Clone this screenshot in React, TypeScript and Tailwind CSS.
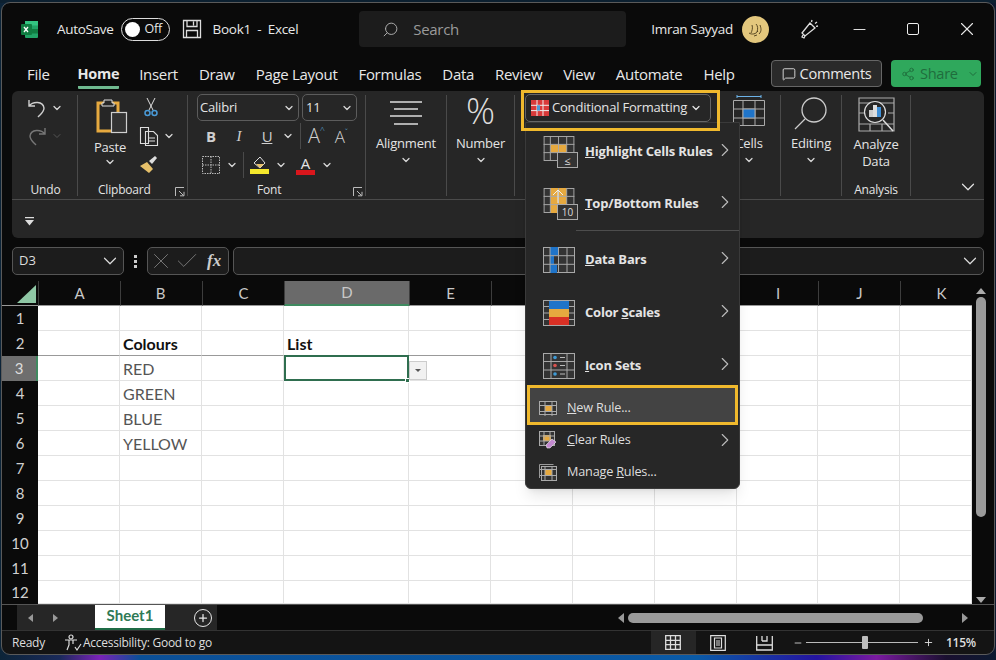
import React from 'react';
import { ChevronDown, ChevronRight, Search, X, Minus, Plus, Check, MessageSquare, Share2 } from 'lucide-react';

const UI = "font-['Open_Sans','Noto_Sans',sans-serif]";
const rows = [1, 2, 3, 4, 5, 6, 7, 8, 9, 10, 11, 12];
const cols = ['A', 'B', 'C', 'D', 'E', 'F', 'G', 'H', 'I', 'J', 'K'];
const values: Record<string, string> = { B2: 'Colours', D2: 'List', B3: 'RED', B4: 'GREEN', B5: 'BLUE', B6: 'YELLOW' };

const Chev = ({ className = '' }: { className?: string }) => (
    <ChevronDown size={12} strokeWidth={2.5} className={`text-[#d8d8d8] ${className}`} />
);

const Launcher = () => (
    <svg width="10" height="10" viewBox="0 0 10 10" fill="none" stroke="#bbb" strokeWidth="1">
        <path d="M.5 9V.5H9M.5.5M4 4l4.5 4.5M5 8.8h4V4.8" />
    </svg>
);

// small spreadsheet glyph used by the menu, the fill is what differs per item
const GridIcon = ({ h = 26, children }: { h?: number; children?: React.ReactNode }) => (
    <svg width={32} height={h} viewBox="0 0 32 26" fill="none" className="shrink-0">
        <rect x=".5" y=".5" width="31" height="25" fill="#333" stroke="#a8a8a8" />
        {children}
        <path d="M7 0v26M15.500 0v26M24 0v26M0 8.700h32M0 17.300h32" stroke="#a8a8a8" strokeWidth="1" />
    </svg>
);

function SmallIcon({ kind }: { kind: string }) {
    if (kind === 'clear') {
        return (
            <svg width="18" height="18" viewBox="0 0 18 18" fill="none" className="shrink-0">
                <rect x=".5" y=".5" width="15" height="14" stroke="#aaa" fill="#333" />
                <rect x="4" y="4" width="8" height="6" fill="#e6a93f" />
                <path d="M5 .5v14M11 .5v14M.5 5h15M.5 10h15" stroke="#aaa" />
                <path d="M7 14l6-6 4 3-6 6H8z" fill="#c38ad0" stroke="#eee" strokeWidth=".6" />
            </svg>
        );
    }
    return (
        <svg width="18" height="18" viewBox="0 0 18 18" fill="none" className="shrink-0">
            {kind === 'manage' && <path d="M.5 15V1.500M.5 1.500h14" stroke="#999" />}
            <rect x={kind === 'manage' ? 2.5 : .5} y={kind === 'manage' ? 3.5 : 2.5} width={kind === 'manage' ? 15 : 17} height={kind === 'manage' ? 14 : 13} stroke="#aaa" fill="#333" />
            <rect x="6" y="6.500" width="7" height="6" fill="#e6a93f" />
            <path d="M6 3v14M13 3v14M1 6.500h16M1 12.500h16" stroke="#aaa" />
        </svg>
    );
}

const menuIcons: Record<string, React.ReactNode> = {
    highlight: (
        <div className="relative w-[35px] h-[32px] shrink-0">
            <GridIcon h={25}><rect x="7" y="8.700" width="17" height="8.600" fill="#e6a93f" /></GridIcon>
            <div className="absolute right-0 bottom-0 w-[21px] h-[16px] bg-[#333] border-[1.5px] border-[#a8a8a8] flex items-center justify-center text-[11px] leading-none text-[#ddd]">≤</div>
        </div>
    ),
    top: (
        <div className="relative w-[35px] h-[32px] shrink-0">
            <GridIcon h={25}>
                <rect x="7" y="0" width="17" height="26" fill="#e6a93f" />
            </GridIcon>
            <svg width="12" height="14" viewBox="0 0 12 14" fill="none" stroke="#eee" className="absolute left-[9px] top-[1px]"><path d="M6 14V1M1 6l5-5 5 5" /></svg>
            <div className="absolute right-0 bottom-0 w-[21px] h-[16px] bg-[#333] border-[1.5px] border-[#a8a8a8] flex items-center justify-center text-[10px] leading-none text-[#ddd]">10</div>
        </div>
    ),
    bars: <GridIcon><path fill="#1f74c9" d="M7 0h9v8.700H7zM7 8.700h4v8.600H7zM7 17.300h7V26H7z" /></GridIcon>,
    scales: (
        <svg width="32" height="26" viewBox="0 0 32 26" fill="none" className="shrink-0">
            <rect x=".5" y=".5" width="31" height="25" fill="#333" stroke="#a8a8a8" />
            <path d="M0 6.500h6M0 13h6M0 19.500h6M26 6.500h6M26 13h6M26 19.500h6" stroke="#a8a8a8" />
            <rect x="6" y="1" width="20" height="8" fill="#1f74c9" />
            <rect x="6" y="9" width="20" height="8" fill="#e6a93f" />
            <rect x="6" y="17" width="20" height="8" fill="#d93025" />
        </svg>
    ),
    sets: (
        <svg width="32" height="26" viewBox="0 0 32 26" fill="none" className="shrink-0">
            <rect x=".5" y=".5" width="31" height="25" fill="#333" stroke="#a8a8a8" />
            <path d="M8 0v26M24 0v26M0 8.500h32M0 17h32" stroke="#a8a8a8" />
            <circle cx="12" cy="4.500" r="1.800" fill="#3f9bd6" /><circle cx="12" cy="12.500" r="1.800" fill="#d9534f" /><circle cx="12" cy="21" r="1.800" fill="#3f9bd6" />
            <path d="M17 4.500h5M17 12.500h5M17 21h5" stroke="#bbb" />
        </svg>
    ),
};

const MenuChevron = () => <ChevronRight size={22} strokeWidth={1.2} className="text-[#bbb] shrink-0" />;

function BigItem({ icon, label, underline, pre = '', h }: { icon: string; label: string; underline: string; pre?: string; h: string }) {
    return (
        <div className={`flex items-center pl-[17px] pr-[3px] ${h}`}>
            <div className="w-[42px] flex shrink-0">{menuIcons[icon]}</div>
            <span className="flex-1 text-[13px] font-bold text-[#e4e4e4] tracking-[-0.2px]">{pre}<u>{underline}</u>{label}</span>
            <div className="mb-[4px]"><MenuChevron /></div>
        </div>
    );
}

function CondMenu() {
    return (
        <div className="absolute left-[523px] top-[119px] w-[215px] h-[367px] bg-[#272727] rounded-b-[6px] border border-[#3a3a3a] pt-[3px] shadow-lg z-20">
            <BigItem icon="highlight" underline="H" label="ighlight Cells Rules" h="h-[52px]" />
            <BigItem icon="top" underline="T" label="op/Bottom Rules" h="h-[52px]" />
            <div className="h-[3px] ml-[50px] border-t border-[#4d4d4d]" />
            <BigItem icon="bars" underline="D" label="ata Bars" h="h-[53px]" />
            <BigItem icon="scales" pre="Color " underline="S" label="cales" h="h-[53px]" />
            <BigItem icon="sets" underline="I" label="con Sets" h="h-[53px]" />
            <div className="relative h-[32px] flex items-center pl-[13px] text-[12.7px] text-[#dedede] tracking-[-0.2px]">
                <div className="absolute left-[1px] right-[1px] top-[-7px] bottom-[-1px] border-[3px] border-[#f0b92d] bg-[#434343]" />
                <div className="relative flex items-center">
                    <div className="w-[28px]"><SmallIcon kind="new" /></div>
                    <span><u>N</u>ew Rule...</span>
                </div>
            </div>
            <div className="h-[32px] flex items-center pl-[13px] pr-[3px] text-[12.7px] text-[#dedede] tracking-[-0.2px]">
                <div className="w-[28px]"><SmallIcon kind="clear" /></div>
                <span className="flex-1"><u>C</u>lear Rules</span>
                <MenuChevron />
            </div>
            <div className="h-[32px] flex items-center pl-[13px] text-[12.7px] text-[#dedede] tracking-[-0.2px]">
                <div className="w-[28px]"><SmallIcon kind="manage" /></div>
                <span>Manage <u>R</u>ules...</span>
            </div>
        </div>
    );
}

function TitleBar() {
    return (
        <div className="h-[57px] flex items-center pb-[5px] text-[13.5px] text-[#e8e8e8] tracking-[-0.3px]">
            <svg width="19" height="19" viewBox="0 0 19 19" className="ml-[18px]">
                <rect x="5" y="1" width="13" height="17" rx="1" fill="#21a366" />
                <rect x="5" y="1" width="13" height="4.500" fill="#33c481" />
                <rect x="11" y="9" width="7" height="4.500" fill="#107c41" />
                <rect x="1" y="4" width="11" height="11" rx="1" fill="#107c41" />
                <path d="M4 7l4 5M8 7l-4 5" stroke="#fff" strokeWidth="1.300" />
            </svg>
            <span className="ml-[18px]">AutoSave</span>
            <div className="ml-[7px] w-[49px] h-[23px] rounded-full border-[1.5px] border-[#ddd] flex items-center pl-[3px]">
                <div className="w-[15px] h-[15px] rounded-full bg-white" />
                <span className="ml-[5px] text-[12.5px]">Off</span>
            </div>
            <svg width="20" height="20" viewBox="0 0 20 20" fill="none" stroke="#ddd" strokeWidth="1.300" className="ml-[12px]">
                <path d="M1.500 1.500h17v17h-17zM5 1.500v6h10v-6M4.500 18.500v-7h11v7M11.500 2.500v4" />
            </svg>
            <span className="ml-[11px] whitespace-pre">Book1  -  Excel</span>
            <div className="ml-[61px] w-[267px] h-[36px] rounded-[4px] bg-[#1c1c1c] flex items-center pl-[23px] text-[#9a9a9a] text-[15px]">
                <Search size={17} strokeWidth={1.400} className="-scale-x-100 text-[#aaa]" />
                <span className="ml-[14px]">Search</span>
            </div>
            <span className="ml-[25px]">Imran Sayyad</span>
            <svg width="27" height="27" viewBox="0 0 27 27" className="ml-[9px]">
                <circle cx="13.500" cy="13.500" r="13.500" fill="#e3c77d" />
                <path d="M7 17c3 2 7 1 9-2M10 9c1 3 0 6-1 8M14 8c2 2 2 5 1 8M18 9c1 3 2 6-1 9M12 20l3-1" stroke="#4a3a18" strokeWidth=".9" fill="none" />
            </svg>
            <svg width="20" height="20" viewBox="0 0 20 20" fill="none" stroke="#e0e0e0" strokeWidth="1.300" className="ml-[30px]">
                <path d="M11 4l5 5-10 8-3-3zM6 17l-1 2-2-1 1-2M13 1l-.5 2M18 3l-2 1.500M19 7l-2 .3" />
            </svg>
            <Minus size={19} strokeWidth={1.200} className="ml-[31px]" />
            <div className="ml-[38px] w-[12px] h-[12px] border-[1.5px] border-[#eee] rounded-[2px]" />
            <X size={22} strokeWidth={1.200} className="ml-[37px]" />
        </div>
    );
}

function TabBar() {
    const tabs = ['Insert', 'Draw', 'Page Layout', 'Formulas', 'Data', 'Review', 'View', 'Automate', 'Help'];
    return (
        <div className="h-[30px] flex items-start text-[15px] text-[#e8e8e8] tracking-[-0.3px]">
            <span className="ml-[25px] mt-[3px]">File</span>
            <span className="ml-[28px] mt-[3px] font-bold border-b-[3px] border-[#6fb98f] h-[26px] rounded-b-[1px] text-[14.5px]">Home</span>
            <div className="ml-[20px] mt-[3px] flex gap-[21px]">
                {tabs.map((t) => <span key={t}>{t}</span>)}
            </div>
            <div className="ml-auto mr-[13px] flex gap-[9px] text-[14.6px]">
                <div className="w-[111px] h-[27px] rounded-[4px] border border-[#666] bg-[#2a2a2a] flex items-center justify-center gap-[4px]">
                    <MessageSquare size={14} strokeWidth={1.500} />Comments
                </div>
                <div className="w-[90px] h-[27px] rounded-[4px] bg-[#2fa85c] flex items-center pl-[10px] text-[#1f6d3c]">
                    <Share2 size={14} strokeWidth={1.500} /><span className="ml-[5px]">Share</span>
                    <ChevronDown size={12} strokeWidth={2} className="ml-[9px]" />
                </div>
            </div>
        </div>
    );
}

function BigGroup({ w, label, icon }: { w: string; label: string; icon: React.ReactNode }) {
    return (
        <div className={`${w} h-[101px] mt-[4px] flex flex-col items-center border-r border-[#4a4a4a] shrink-0`}>
            <div className="h-[35px] flex items-end justify-center">{icon}</div>
            <span className="text-[13px] mt-[4px] leading-[18px] text-center">{label}</span>
            <Chev className="mt-[2px]" />
        </div>
    );
}

function Ribbon() {
    return (
        <div className="mx-[10px] mt-[1px] h-[147px] bg-[#262626] rounded-[6px] text-[#e4e4e4] text-[12px] tracking-[-0.2px]">
            <div className="h-[109px] border-b-[1.5px] border-[#4b4b4b] flex">
                {/* Undo */}
                <div className="w-[66px] h-[101px] mt-[4px] border-r border-[#4a4a4a] flex flex-col items-center shrink-0">
                    <div className="flex items-center gap-[5px] mt-[2px] ml-[2px] h-[22px]">
                        <svg width="18" height="20" viewBox="0 0 18 20" fill="none" stroke="#cfcfcf" strokeWidth="1.400"><path d="M1 2v6h6M1 8c4-5 14-5 15 2 0 4-3 6-6 9" /></svg>
                        <Chev />
                    </div>
                    <div className="flex items-center gap-[5px] mt-[6px] ml-[2px] h-[22px]">
                        <svg width="18" height="20" viewBox="0 0 18 20" fill="none" stroke="#777" strokeWidth="1.400"><path d="M17 2v6h-6M17 8C13 3 3 3 2 10c0 4 3 6 6 9" /></svg>
                        <ChevronDown size={12} className="text-[#555]" />
                    </div>
                    <span className="mt-auto mb-[-3px] ml-[2px] leading-[18px]">Undo</span>
                </div>
                {/* Clipboard */}
                <div className="w-[110px] h-[101px] mt-[4px] border-r border-[#4a4a4a] flex shrink-0 relative">
                    <div className="w-[52px] ml-[6px] flex flex-col items-center">
                        <svg width="32" height="36" viewBox="0 0 32 36" fill="none" className="mt-[3px] ml-[4px]">
                            <path d="M2 5h20v28H2z" stroke="#e6a93f" strokeWidth="3" />
                            <path d="M8 5V2h8v3h2v3H6V5z" stroke="#ddd" strokeWidth="1" fill="#262626" />
                            <rect x="15.500" y="14.500" width="15" height="20" fill="#333" stroke="#cfcfcf" strokeWidth="1.200" />
                        </svg>
                        <span className="text-[13px] mt-[4px] leading-[18px]">Paste</span>
                        <Chev />
                    </div>
                    <div className="flex flex-col ml-[3px]">
                        <svg width="14" height="20" viewBox="0 0 14 20" fill="none" stroke="#ddd" className="ml-[5px] mt-[2px]">
                            <path d="M3 1l6 12M11 1L5 13" /><circle cx="3.500" cy="16" r="2.500" stroke="#4a9bd8" strokeWidth="1.500" /><circle cx="10.500" cy="16" r="2.500" stroke="#4a9bd8" strokeWidth="1.500" />
                        </svg>
                        <div className="flex items-center gap-[4px] mt-[9px]">
                            <svg width="20" height="20" viewBox="0 0 20 20" fill="none" stroke="#ddd" strokeWidth="1.100">
                                <path d="M1.500 1.500h8v16h-8zM6.500 5.500h8l4 4v10h-12z" fill="#262626" /><path d="M9 12h7M9 15h7" />
                            </svg>
                            <Chev />
                        </div>
                        <svg width="20" height="20" viewBox="0 0 20 20" className="mt-[8px]">
                            <path d="M1 12l7-4 6 7-4 4z" fill="#e6c06a" /><path d="M10 7l6-5 2 2-5 6" fill="#ddd" />
                        </svg>
                    </div>
                    <span className="absolute left-[20px] bottom-[-3px] leading-[18px]">Clipboard</span>
                    <div className="absolute right-[2px] bottom-[-1px]"><Launcher /></div>
                </div>
                {/* Font */}
                <div className="w-[178px] h-[101px] mt-[4px] border-r border-[#4a4a4a] relative shrink-0 pl-[9px]">
                    <div className="flex gap-[3px] mt-[-1px] text-[13px]">
                        <div className="w-[102px] h-[27px] rounded-[5px] border border-[#5c5c5c] flex items-center justify-between pl-[2px] pr-[3px]">Calibri<Chev /></div>
                        <div className="w-[55px] h-[27px] rounded-[5px] border border-[#5c5c5c] flex items-center justify-between pl-[3px] pr-[3px]">11<Chev /></div>
                    </div>
                    <div className="flex items-center h-[28px] text-[15px] mt-[1px]">
                        <span className="w-[28px] text-center font-bold text-[#cfcfcf]">B</span>
                        <span className="w-[28px] text-center italic text-[#cfcfcf] font-['Liberation_Serif',serif]">I</span>
                        <span className="w-[28px] text-center underline text-[#cfcfcf]">U</span>
                        <Chev className="ml-[1px]" />
                        <div className="h-[26px] border-l border-[#4a4a4a] ml-[6px] mr-[7px]" />
                        <span className="text-[20px] leading-none text-[#d0d0d0] font-light">A<span className="text-[9px] align-top text-[#5aa6dd]">^</span></span>
                        <span className="text-[17px] leading-none text-[#d0d0d0] font-light ml-[10px]">A<span className="text-[9px] align-top text-[#5aa6dd]">ˇ</span></span>
                    </div>
                    <div className="flex items-center h-[28px] mt-[1px]">
                        <svg width="18" height="18" viewBox="0 0 18 18" fill="none" stroke="#bbb" className="ml-[5px]" strokeDasharray="1.500 1"><path d="M.5.5h17v17H.5zM9 .5v17M.5 9h17" /></svg>
                        <Chev className="ml-[6px]" />
                        <div className="h-[26px] border-l border-[#4a4a4a] ml-[5px]" />
                        <div className="ml-[6px] w-[19px] flex flex-col items-center">
                            <svg width="16" height="13" viewBox="0 0 16 13" fill="none"><path d="M2 7l6-6 5 6-5 5z" stroke="#ddd" /><path d="M4 8h8l-4 4z" fill="#e6c06a" /></svg>
                            <div className="w-[19px] h-[5px] bg-[#f5e82c]" />
                        </div>
                        <Chev className="ml-[6px]" />
                        <div className="ml-[9px] w-[19px] flex flex-col items-center leading-none">
                            <span className="text-[15px] h-[14px] leading-[14px]">A</span>
                            <div className="w-[19px] h-[5px] bg-[#d9161c]" />
                        </div>
                        <Chev className="ml-[6px]" />
                    </div>
                    <span className="absolute left-[69px] bottom-[-3px] leading-[18px]">Font</span>
                    <div className="absolute right-[2px] bottom-[-1px]"><Launcher /></div>
                </div>
                <BigGroup
                    w="w-[81px]"
                    label="Alignment"
                    icon={
                        <svg width="34" height="28" viewBox="0 0 34 28" stroke="#ddd" strokeWidth="1.500" className="mb-[2px]"><path d="M1 2h32M5 9h24M1 16h32M5 24h24" /></svg>
                    }
                />
                <BigGroup w="w-[68px]" label="Number" icon={<span className="text-[36px] leading-[38px] font-light text-[#ddd]">%</span>} />
                {/* Styles, mostly under the menu */}
                <div className="w-[266px] h-[101px] mt-[4px] border-r border-[#4a4a4a] shrink-0 flex">
                    <div className="ml-[10px] mt-[-1px] w-[186px] h-[28px] rounded-[5px] border border-[#666] flex items-center pl-[5px] text-[13px]">
                        <svg width="18" height="16" viewBox="0 0 18 16" className="shrink-0">
                            <rect width="18" height="16" fill="#d93a3a" />
                            <path d="M0 5.300h18M0 10.600h18M6 0v16M12 0v16" stroke="#eee" />
                            <rect x="6" y="5.300" width="3" height="5.300" fill="#4a9bd8" />
                        </svg>
                        <span className="ml-[3px] whitespace-nowrap">Conditional Formatting</span>
                        <ChevronDown size={12} strokeWidth={2.500} className="ml-[3px]" />
                    </div>
                    <div className="ml-[21px] flex flex-col items-center w-[34px]">
                        <svg width="34" height="32" viewBox="0 0 34 32" fill="none" stroke="#aaa">
                            <path d="M5 1.500h24M5 0v3M29 0v3" stroke="#6db3e8" />
                            <path d="M1.500 5.500h31v25h-31zM1.500 14h31M1.500 23h31M11 5.500v25M23 5.500v25" />
                            <rect x="11" y="14" width="12" height="9" fill="#1f74c9" />
                        </svg>
                        <span className="text-[13px] mt-[7px] leading-[18px]">Cells</span>
                        <Chev className="mt-[2px]" />
                    </div>
                </div>
                <BigGroup
                    w="w-[61px]"
                    label="Editing"
                    icon={
                        <svg width="34" height="33" viewBox="0 0 34 33" fill="none" stroke="#ccc" strokeWidth="1.300"><circle cx="20" cy="13" r="12" /><path d="M11 22L1 32" /></svg>
                    }
                />
                <div className="w-[69px] h-[101px] mt-[4px] border-r border-[#4a4a4a] flex flex-col items-center shrink-0">
                    <svg width="37" height="37" viewBox="0 0 37 37" fill="none" stroke="#aaa" strokeWidth="1.200" className="mt-[2px]">
                        <path d="M1 1h35v33H1zM1 6h35M1 27h35M1 16h6M30 16h6M12 27v7M24 27v7" />
                        <circle cx="17" cy="15" r="10.500" fill="#262626" stroke="#ddd" />
                        <path d="M25 23l10 11" stroke="#ddd" strokeWidth="1.500" />
                        <rect x="11" y="13" width="4" height="7" fill="#ccc" stroke="none" />
                        <rect x="15" y="8" width="4" height="12" fill="#ddd" stroke="none" />
                        <rect x="19" y="10" width="4" height="10" fill="#3f8fd6" stroke="none" />
                    </svg>
                    <span className="text-[13px] leading-[17px] mt-[2px]">Analyze</span>
                    <span className="text-[13px] leading-[17px]">Data</span>
                    <span className="mt-auto mb-[-3px] leading-[18px]">Analysis</span>
                </div>
                <div className="flex-1 flex items-end justify-end pr-[5px] pb-[1px]">
                    <ChevronDown size={22} strokeWidth={1.300} />
                </div>
            </div>
            <div className="h-[37px] flex items-center pl-[13px] pt-[5px]">
                <svg width="9" height="9" viewBox="0 0 9 9" fill="#ddd"><path d="M0 0h9v1.200H0zM0 3h9L4.500 8.500z" /></svg>
            </div>
        </div>
    );
}

function FormulaBar() {
    return (
        <div className="mx-[10px] mt-[9px] h-[28px] flex text-[#dcdcdc] text-[13px]">
            <div className="w-[112px] rounded-[5px] border border-[#555] bg-[#1c1c1c] flex items-center justify-between pl-[6px] pr-[2px]">
                D3<ChevronDown size={22} strokeWidth={1.300} />
            </div>
            <div className="w-[23px] flex flex-col items-center justify-center gap-[2px]">
                <div className="w-[3px] h-[3px] bg-[#ccc]" /><div className="w-[3px] h-[3px] bg-[#ccc]" /><div className="w-[3px] h-[3px] bg-[#ccc]" />
            </div>
            <div className="w-[82px] rounded-[5px] border border-[#555] bg-[#1c1c1c] flex items-center">
                <X size={26} strokeWidth={.9} className="text-[#777]" />
                <Check size={26} strokeWidth={.9} className="text-[#777]" />
                <span className="ml-[7px] font-['Liberation_Serif',serif] italic font-bold text-[17px] text-[#ccc]">fx</span>
            </div>
            <div className="ml-[4px] flex-1 rounded-[5px] border border-[#555] bg-[#1c1c1c] flex items-center justify-end pr-[2px]">
                <ChevronDown size={22} strokeWidth={1.300} />
            </div>
        </div>
    );
}

function Sheet() {
    return (
        <div className="mt-[6px] flex h-[323px]">
            <div className="w-[970px] grid grid-cols-[36px_82px_82px_82px_125px_82px_82px_82px_82px_81px_82px_72px] grid-rows-[25px_repeat(11,25px)_23px] overflow-hidden">
                <div className="relative border-b border-[#999]">
                    <svg width="20" height="18" viewBox="0 0 20 18" className="absolute left-[15px] top-[4px]"><path d="M19 0v18H0z" fill="#8fc7a5" /></svg>
                </div>
                {cols.map((c) => (
                    <div
                        key={c}
                        className={`flex items-center justify-center text-[15px] text-[#c8c8c8] font-['Lato',sans-serif] border-l border-[#3d3d3d] ${c === 'D' ? 'bg-[#6a6a6a] border-b-2 border-b-[#3f8a60]' : 'border-b border-b-[#999]'} ${c === 'K' ? 'pl-[10px]' : ''} ${c === 'B' ? 'pr-[2px]' : ''}`}
                    >
                        {c}
                    </div>
                ))}
                {rows.map((r) => (
                    <React.Fragment key={r}>
                        <div
                            className={`flex items-center justify-center text-[15px] font-['Lato',sans-serif] ${r === 3 ? 'bg-[#6e6e6e] border-r-2 border-[#3f8a60] text-[#ddd]' : 'text-[#d0d0d0]'}`}
                        >
                            {r}
                        </div>
                        {cols.map((c, i) => {
                            const v = values[c + r];
                            const dark = r === 2 && i < 5;
                            return (
                                <div
                                    key={c}
                                    className={`relative bg-white border-r border-[#e2e2e2] border-b ${dark ? 'border-b-[#999]' : 'border-b-[#e2e2e2]'} flex items-center pl-[3px] pt-[1px] text-[16px] font-['Lato',sans-serif] ${r === 2 ? 'font-bold text-[#111]' : 'text-[#555]'}`}
                                >
                                    {v}
                                    {c === 'D' && r === 3 && (
                                        <>
                                            <div className="absolute left-0 right-[-1px] top-[-1px] bottom-[-1px] border-2 border-[#2f6e4f] z-10" />
                                            <div className="absolute right-[-2px] bottom-[-3px] w-[5px] h-[5px] bg-[#2f6e4f] border border-white z-10" />
                                            <div className="absolute left-[calc(100%+1px)] top-[5px] w-[18px] h-[19px] bg-[#f1f1f1] border border-[#ccc] flex items-center justify-center z-10">
                                                <div className="w-0 h-0 border-l-[3px] border-r-[3px] border-t-[3px] border-l-transparent border-r-transparent border-t-[#555]" />
                                            </div>
                                        </>
                                    )}
                                </div>
                            );
                        })}
                    </React.Fragment>
                ))}
            </div>
            <div className="w-[22px] flex flex-col items-center pt-[7px] pb-[1px] pr-[4px]">
                <div className="w-0 h-0 border-l-[5px] border-r-[5px] border-b-[6px] border-l-transparent border-r-transparent border-b-[#aaa]" />
                <div className="w-[10px] h-[220px] mt-[3px] rounded-full bg-[#9a9a9a]" />
                <div className="mt-auto w-0 h-0 border-l-[5px] border-r-[5px] border-t-[6px] border-l-transparent border-r-transparent border-t-[#aaa]" />
            </div>
        </div>
    );
}

function SheetTabs() {
    return (
        <div className="h-[26px] flex border-t border-[#555] bg-[#0a0a0a]">
            <div className="ml-[15px] w-[78px] bg-[#262626] flex items-center pl-[11px] gap-[20px]">
                <div className="w-0 h-0 border-t-[4px] border-b-[4px] border-r-[5px] border-t-transparent border-b-transparent border-r-[#999]" />
                <div className="w-0 h-0 border-t-[4px] border-b-[4px] border-l-[5px] border-t-transparent border-b-transparent border-l-[#999]" />
            </div>
            <div className="w-[70px] bg-white border-b-2 border-[#1e6b45] flex items-center justify-center pb-[3px] text-[15px] font-bold text-[#2f7a55] font-['Lato',sans-serif]">Sheet1</div>
            <div className="w-[52px] bg-[#262626] flex items-center justify-end pr-[5px]">
                <div className="w-[18px] h-[18px] rounded-full border-[1.500px] border-[#e8e8e8] flex items-center justify-center">
                    <Plus size={12} strokeWidth={2.500} className="text-[#e8e8e8]" />
                </div>
            </div>
            <div className="ml-[399px] w-[356px] flex items-center pl-[2px]">
                <div className="w-0 h-0 border-t-[5px] border-b-[5px] border-r-[6px] border-t-transparent border-b-transparent border-r-[#999]" />
                <div className="ml-[4px] w-[295px] h-[10px] rounded-full bg-[#9a9a9a]" />
                <div className="ml-auto mr-[4px] w-0 h-0 border-t-[5px] border-b-[5px] border-l-[6px] border-t-transparent border-b-transparent border-l-[#999]" />
            </div>
        </div>
    );
}

function StatusBar() {
    return (
        <div className="h-[24px] border-t border-[#333] bg-[#141414] flex items-center text-[12px] text-[#dedede] tracking-[-0.25px] rounded-b-[8px]">
            <span className="ml-[10px]">Ready</span>
            <svg width="18" height="18" viewBox="0 0 18 18" fill="none" stroke="#ddd" strokeWidth="1.200" className="ml-[19px]">
                <circle cx="7" cy="3" r="2" /><path d="M1 6h12M5 6v5l-2 5M9 6v4M11 13l2 3 4-6" />
            </svg>
            <span className="ml-[1px]">Accessibility: Good to go</span>
            <div className="ml-[439px] w-[45px] h-full bg-[#262626] flex items-center justify-center">
                <svg width="16" height="15" viewBox="0 0 16 15" fill="none" stroke="#ddd" strokeWidth="1.300"><path d="M.7.7h14.600v13.600H.7zM5.500.7v13.600M10.500.7v13.600M.7 5.300h14.600M.7 9.700h14.600" /></svg>
            </div>
            <svg width="16" height="16" viewBox="0 0 16 16" fill="none" stroke="#ddd" strokeWidth="1.200" className="ml-[14px]"><path d="M.7.7h14.600v14.600H.7zM4.500 3h7v10h-7zM6 6h4M6 8h4M6 10h4" /></svg>
            <svg width="17" height="16" viewBox="0 0 17 16" fill="none" stroke="#ddd" strokeWidth="1.300" className="ml-[30px]"><path d="M.7 1v14h15.600V1M.7 10h15.600M6 1v5M11 1v5h-5" /></svg>
            <Minus size={10} strokeWidth={2} className="ml-[20px]" />
            <div className="ml-[3px] w-[112px] h-[1px] bg-[#bbb] relative">
                <div className="absolute left-[56px] top-[-6px] w-[6px] h-[13px] rounded-[1px] bg-[#bdbdbd]" />
            </div>
            <Plus size={11} strokeWidth={2} className="ml-[5px]" />
            <span className="ml-[12px] font-semibold">115%</span>
        </div>
    );
}

export default function App() {
    return (
        <div className={`relative w-[996px] h-[660px] overflow-hidden pt-[3px] pl-[2px] bg-[linear-gradient(90deg,#0c2438_0%,#1a2a5a_6%,#7a22b8_10%,#0b4f96_14%,#0a5aa6_70%,#2414a0_82%,#7a1aa0_88%,#1a1030_95%,#0c1a30_100%)] ${UI}`}>
            <div className="absolute top-0 left-0 w-full h-[3px] bg-[#0c2030]" />
            <div className="relative w-[992px] h-[651px] bg-[#0a0a0a] rounded-[8px] outline outline-1 outline-[#5a5a5a]">
                <TitleBar />
                <TabBar />
                <Ribbon />
                <FormulaBar />
                <Sheet />
                <SheetTabs />
                <StatusBar />
                {/* yellow callout around the ribbon button */}
                <div className="absolute left-[519px] top-[87px] w-[199px] h-[41px] border-[3px] border-[#f0b92d] z-30 pointer-events-none" />
                <CondMenu />
            </div>
        </div>
    );
}
